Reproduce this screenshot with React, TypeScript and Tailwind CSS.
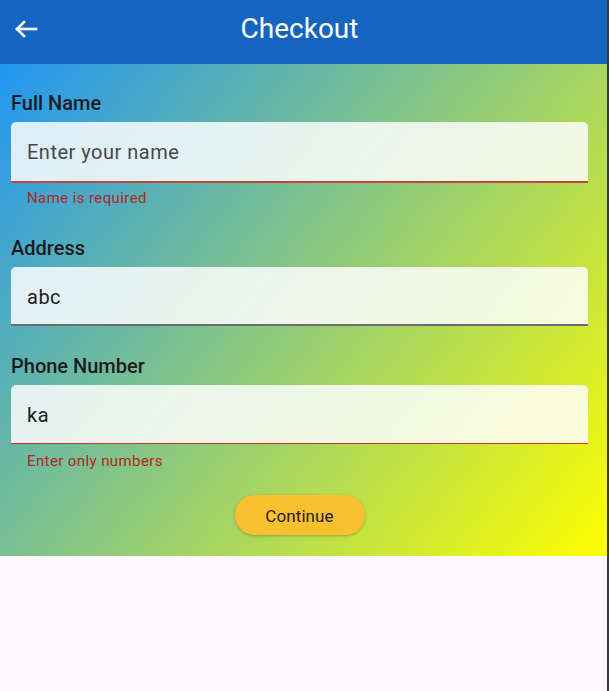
import React from 'react';

type FieldProps = {
  label: string;
  value?: string;
  hint?: string;
  error?: string;
  thick?: boolean;
};

function Field({ label, value, hint, error, thick }: FieldProps) {
  const border = error
    ? thick
      ? 'h-[61px] border-b-2 border-[#c4443e]'
      : 'h-[59px] border-b border-[#d32f2f]'
    : 'h-[59px] border-b-2 border-[#6e6a72]';
  return (
    <div className="flex flex-col">
      <label className="text-[20px] leading-[28px] font-medium text-[#1d1b20]">{label}</label>
      <div className={`mt-[5px] rounded-t-[5px] bg-white/[0.83] px-4 pt-[18px] ${border}`}>
        {value ? (
          <span className="text-[20px] leading-6 tracking-[0.5px] text-[#1d1b20]">{value}</span>
        ) : (
          <span className="text-[20px] leading-6 tracking-[0.5px] text-[#49454f]">{hint}</span>
        )}
      </div>
      {error && (
        <p className={`${thick ? 'mt-[5px]' : 'mt-[7px]'} pl-4 text-[15px] leading-5 tracking-[0.4px] text-[#b3261e]`}>{error}</p>
      )}
    </div>
  );
}

export default function App() {
  return (
    <div className="flex h-[691px] w-full bg-[#fdf7ff] font-['Roboto',sans-serif]">
      <div className="flex flex-1 flex-col">
        <header className="grid h-16 grid-cols-[56px_1fr_56px] items-center bg-[#1565c0] pr-[8px] pb-[7px]">
          <button className="flex items-center pl-[14px] text-white">
            <svg width="24" height="18" viewBox="0 0 24 18" fill="none" stroke="currentColor" strokeWidth="2.6" strokeLinecap="square">
              <path d="M22 9H3" />
              <path d="M10 2L3 9l7 7" />
            </svg>
          </button>
          <h1 className="text-center text-[28px] leading-none font-normal text-white">Checkout</h1>
          <div />
        </header>
        <main className="flex flex-col gap-[26px] bg-[linear-gradient(129deg,#2196f3,#ffff00)] pt-[25px] pr-[19px] pb-[21px] pl-[11px]">
          <Field label="Full Name" hint="Enter your name" error="Name is required" thick />
          <Field label="Address" value="abc" />
          <div className="flex flex-col">
            <Field label="Phone Number" value="ka" error="Enter only numbers" />
            <div className="mt-[24px] flex justify-center">
              <button className="h-10 w-[130px] rounded-full bg-[#fbc02d] pt-[3px] text-[17px] tracking-[0.1px] text-[#1d1b20] shadow-[0_1px_3px_rgba(0,0,0,0.25)]">
                Continue
              </button>
            </div>
          </div>
        </main>
      </div>
      <div className="w-[2px] bg-[#3a3a3c]" />
    </div>
  );
}
